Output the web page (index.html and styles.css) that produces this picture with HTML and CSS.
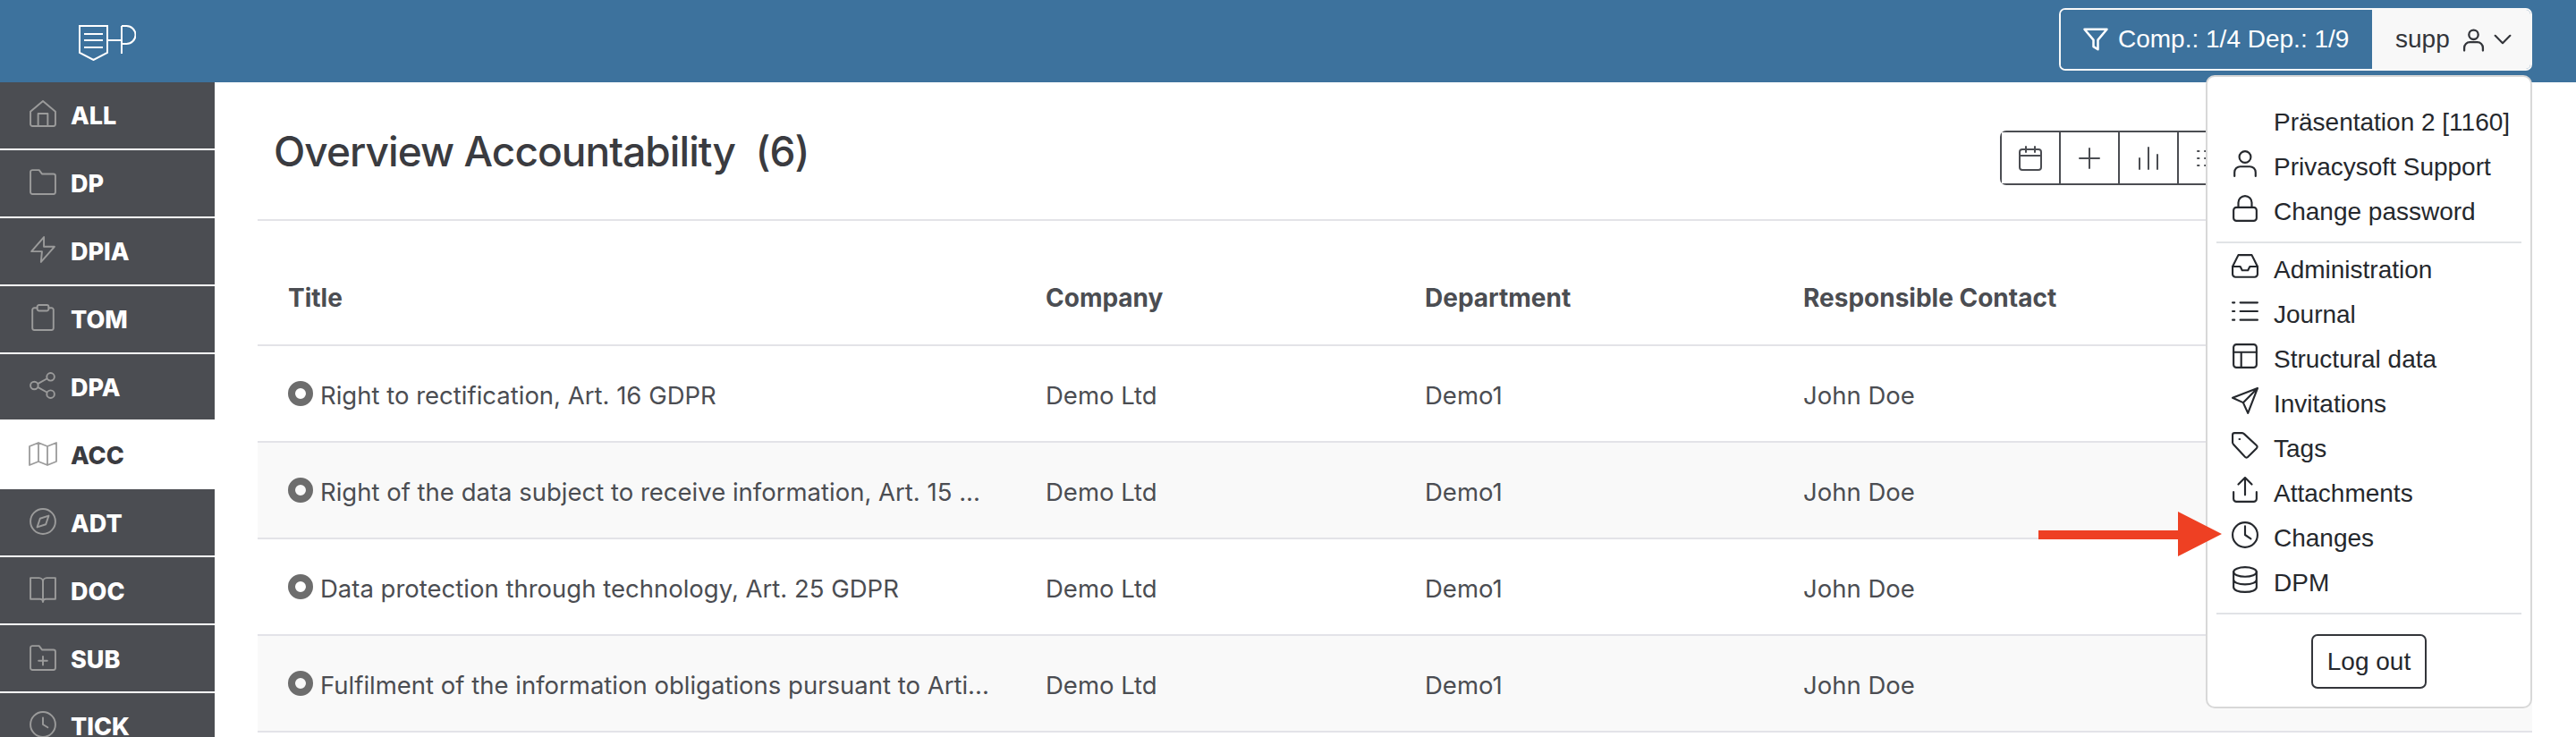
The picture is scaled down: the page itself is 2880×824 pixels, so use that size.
FILE: index.html
```html
<!DOCTYPE html>
<html lang="en">
<head>
    <meta charset="UTF-8">
    <meta name="viewport" content="width=device-width, initial-scale=1.0">
    <title>Overview Accountability</title>
    <link rel="stylesheet" href="styles.css">
</head>
<body>
    <header class="topbar">
        <svg class="logo" viewBox="0 0 64 40" fill="none" stroke="#fff" stroke-width="2">
            <path d="M1 1h31v30L16.500 39 1 31z"/>
            <path d="M6 10h21M6 17h21M6 25h21"/>
            <path d="M32 17h16M48 1v31M48 1h5.500a10 10 0 0 1 0 20H48"/>
        </svg>
        <div class="topbar-actions">
            <button class="filter-btn">
                <svg class="icon filter-icon" viewBox="0 0 24 24"><path d="M2 3h20l-8 9.500V21l-4-2.500v-6z"/></svg>
                Comp.: 1/4 Dep.: 1/9
            </button>
            <button class="user-btn">
                supp
                <svg class="icon user-icon" viewBox="0 0 24 24"><circle cx="12" cy="7" r="5"/><path d="M2 24v-3a6 6 0 0 1 6-6h8a6 6 0 0 1 6 6v3"/></svg>
                <svg class="icon chevron-icon" viewBox="0 0 24 24"><path d="M2 7l10 10L22 7"/></svg>
            </button>
        </div>
    </header>

    <div class="layout">
        <nav class="sidebar">
            <a class="side-item"><svg class="icon side-icon" viewBox="0 0 28 28"><path d="M1 12L14 1l13 11v13a2 2 0 0 1-2 2H3a2 2 0 0 1-2-2z"/><path d="M9 27V14h10v13"/></svg>ALL</a>
            <a class="side-item"><svg class="icon side-icon" viewBox="0 0 28 28"><path d="M1 4a2 2 0 0 1 2-2h7l3 4h12a2 2 0 0 1 2 2v17a2 2 0 0 1-2 2H3a2 2 0 0 1-2-2z"/></svg>DP</a>
            <a class="side-item"><svg class="icon side-icon" viewBox="0 0 28 28"><path d="M15 1L2 16h11l-1 11 14-16H15z"/></svg>DPIA</a>
            <a class="side-item"><svg class="icon side-icon" viewBox="0 0 28 28"><path d="M8 4H5a2 2 0 0 0-2 2v19a2 2 0 0 0 2 2h18a2 2 0 0 0 2-2V6a2 2 0 0 0-2-2h-3"/><rect x="8" y="1" width="12" height="6" rx="2"/></svg>TOM</a>
            <a class="side-item"><svg class="icon side-icon" viewBox="0 0 28 28"><circle cx="22" cy="5" r="4"/><circle cx="5" cy="14" r="4"/><circle cx="22" cy="23" r="4"/><path d="M9 12l9-5M9 16l9 5"/></svg>DPA</a>
            <a class="side-item active"><svg class="icon side-icon wide" viewBox="0 0 32 28"><path d="M1 6l10-4 10 4 10-4v21l-10 4-10-4-10 4zM11 2v21M21 6v21"/></svg>ACC</a>
            <a class="side-item"><svg class="icon side-icon" viewBox="0 0 28 28"><circle cx="14" cy="14" r="13"/><path d="M20 8l-3 9-9 3 3-9z"/></svg>ADT</a>
            <a class="side-item"><svg class="icon side-icon" viewBox="0 0 28 28"><path d="M1 2h9a4 4 0 0 1 4 4v21a3 3 0 0 0-3-3H1zM27 2h-9a4 4 0 0 0-4 4v21a3 3 0 0 1 3-3h10z"/></svg>DOC</a>
            <a class="side-item"><svg class="icon side-icon" viewBox="0 0 28 28"><path d="M1 4a2 2 0 0 1 2-2h7l3 4h12a2 2 0 0 1 2 2v17a2 2 0 0 1-2 2H3a2 2 0 0 1-2-2z"/><path d="M14 13v9M9.500 17.500h9"/></svg>SUB</a>
            <a class="side-item"><svg class="icon side-icon" viewBox="0 0 28 28"><circle cx="14" cy="14" r="13"/><path d="M14 7v7l5 3"/></svg>TICK</a>
        </nav>

        <main class="content">
            <div class="page-head">
                <h1>Overview Accountability&nbsp; (6)</h1>
                <div class="toolbar">
                    <button class="tool"><svg class="icon tool-icon" viewBox="0 0 28 28"><rect x="2" y="4" width="24" height="23" rx="3"/><path d="M2 11h24M9 1v6M19 1v6"/></svg></button>
                    <button class="tool"><svg class="icon tool-icon" viewBox="0 0 28 28"><path d="M14 3v22M3 14h22"/></svg></button>
                    <button class="tool"><svg class="icon tool-icon" viewBox="0 0 28 28"><path d="M14 2v24M4 14v12M24 10v16"/></svg></button>
                    <button class="tool"><svg class="icon tool-icon" viewBox="0 0 28 28"><path d="M3 6h1.500M3 14h1.500M3 22h1.500M11 6h1.500M11 14h1.500M11 22h1.500M19 6h6M19 14h6M19 22h6"/></svg></button>
                    <button class="tool"></button>
                </div>
            </div>

            <table class="overview">
                <colgroup><col class="col-title"><col class="col-company"><col class="col-dept"><col class="col-contact"></colgroup>
                <thead>
                    <tr><th>Title</th><th>Company</th><th>Department</th><th>Responsible Contact</th></tr>
                </thead>
                <tbody>
                    <tr><td><span class="dot"></span>Right to rectification, Art. 16 GDPR</td><td>Demo Ltd</td><td>Demo1</td><td>John Doe</td></tr>
                    <tr><td><span class="dot"></span>Right of the data subject to receive information, Art. 15 ...</td><td>Demo Ltd</td><td>Demo1</td><td>John Doe</td></tr>
                    <tr><td><span class="dot"></span>Data protection through technology, Art. 25 GDPR</td><td>Demo Ltd</td><td>Demo1</td><td>John Doe</td></tr>
                    <tr><td><span class="dot"></span>Fulfilment of the information obligations pursuant to Arti...</td><td>Demo Ltd</td><td>Demo1</td><td>John Doe</td></tr>
                </tbody>
            </table>
        </main>
    </div>

    <!-- user dropdown, open -->
    <div class="user-menu">
        <a class="menu-item"><span class="menu-slot"></span>Präsentation 2 [1160]</a>
        <a class="menu-item"><svg class="icon menu-icon" viewBox="0 0 28 28"><circle cx="14" cy="7" r="6"/><path d="M3 27v-4a6 6 0 0 1 6-6h10a6 6 0 0 1 6 6v4"/></svg>Privacysoft Support</a>
        <a class="menu-item"><svg class="icon menu-icon" viewBox="0 0 28 28"><rect x="2" y="13" width="24" height="14" rx="3"/><path d="M7 13V8a7 7 0 0 1 14 0v5"/></svg>Change password</a>
        <hr class="menu-sep first">
        <a class="menu-item"><svg class="icon menu-icon" viewBox="0 0 28 28"><path d="M1 14h8l2 4h6l2-4h8"/><path d="M7 2h14l6 12v8a3 3 0 0 1-3 3H4a3 3 0 0 1-3-3v-8z"/></svg>Administration</a>
        <a class="menu-item"><svg class="icon menu-icon" viewBox="0 0 28 28"><path d="M9 5h18M9 14h18M9 23h18M1 5h2M1 14h2M1 23h2"/></svg>Journal</a>
        <a class="menu-item"><svg class="icon menu-icon" viewBox="0 0 28 28"><rect x="2" y="2" width="24" height="24" rx="3"/><path d="M2 10h24M10 10v16"/></svg>Structural data</a>
        <a class="menu-item"><svg class="icon menu-icon" viewBox="0 0 28 28"><path d="M27 1L1 11l11 5 5 11zM27 1L12 16"/></svg>Invitations</a>
        <a class="menu-item"><svg class="icon menu-icon" viewBox="0 0 28 28"><path d="M1 3a2 2 0 0 1 2-2h8a3 3 0 0 1 2 1l13 12a2 2 0 0 1 0 3l-9 9a2 2 0 0 1-3 0L2 13a3 3 0 0 1-1-2z"/><path d="M8 7.500h.5"/></svg>Tags</a>
        <a class="menu-item"><svg class="icon menu-icon" viewBox="0 0 28 28"><path d="M2 16v7a3 3 0 0 0 3 3h18a3 3 0 0 0 3-3v-7M14 19V2M7 8l7-7 7 7"/></svg>Attachments</a>
        <a class="menu-item"><svg class="icon menu-icon" viewBox="0 0 28 28"><circle cx="14" cy="14" r="13"/><path d="M14 5v9l6 4"/></svg>Changes</a>
        <a class="menu-item"><svg class="icon menu-icon" viewBox="0 0 28 28"><ellipse cx="14" cy="6" rx="12" ry="5"/><path d="M2 6v16c0 3 5 5 12 5s12-2 12-5V6M2 14c0 3 5 5 12 5s12-2 12-5"/></svg>DPM</a>
        <hr class="menu-sep">
        <button class="logout">Log out</button>
    </div>

    <!-- annotation arrow on the screenshot -->
    <svg class="callout" viewBox="0 0 205 50"><path d="M0 21h156V0l49 25-49 25V31H0z"/></svg>
</body>
</html>
```

FILE: styles.css
```css
* {
    box-sizing: border-box;
}

html, body {
    height: 824px;
    overflow: hidden;
}

body {
    margin: 0;
    background: #fff;
    color: #3a3b40;
    font-family: 'Inter', sans-serif;
    display: flex;
    flex-direction: column;
    position: relative;
}

.icon {
    fill: none;
    stroke: currentColor;
    stroke-width: 2;
    stroke-linecap: round;
    stroke-linejoin: round;
    flex-shrink: 0;
}

.topbar {
    height: 92px;
    flex-shrink: 0;
    background: #3d729d;
    display: flex;
    align-items: flex-start;
    justify-content: space-between;
    padding: 9px 49px 0 88px;
}

.logo {
    width: 64px;
    height: 40px;
    margin-top: 19px;
}

.topbar-actions {
    display: flex;
    height: 70px;
    border-radius: 7px;
    overflow: hidden;
    border: 2px solid #f8f8f8;
    font-family: 'Liberation Sans', Arial, sans-serif;
    font-size: 28px;
}

.topbar-actions button {
    font: inherit;
    border: 0;
    display: flex;
    align-items: center;
    padding: 0;
}

.filter-btn {
    width: 348px;
    background: #3d729d;
    color: #fff;
    padding-left: 24px !important;
    gap: 10px;
}

.filter-icon {
    width: 30px;
    height: 34px;
}

.user-btn {
    width: 177px;
    background: #f8f8f8;
    color: #33353a;
    padding-left: 26px !important;
}

.user-icon {
    width: 25px;
    height: 28px;
    margin-left: 14px;
    stroke-width: 2.2;
}

.chevron-icon {
    width: 20px;
    height: 20px;
    margin-left: 10px;
    stroke-width: 2.6;
}

.layout {
    display: flex;
    flex: 1;
    min-height: 0;
}

.sidebar {
    width: 240px;
    flex-shrink: 0;
    display: flex;
    flex-direction: column;
}

.side-item {
    height: 75.900px;
    flex-shrink: 0;
    background: #4b4d52;
    color: #fff;
    border-bottom: 2px solid #fff;
    display: flex;
    align-items: center;
    padding: 2px 0 0 33px;
    font-weight: 800;
    font-size: 27px;
}

.side-item.active {
    background: #fff;
    color: #3a3b40;
    border-bottom: 0;
    padding-top: 0;
}

.side-icon {
    width: 30px;
    height: 30px;
    margin-right: 16px;
    color: #9b9b9b;
    stroke-width: 1.800;
    margin-top: -5px;
}

.side-icon.wide {
    width: 32px;
    margin-left: -1px;
    margin-right: 15px;
}

.content {
    flex: 1;
    padding: 0 49px 0 48px;
    min-width: 0;
}

.page-head {
    height: 155px;
    border-bottom: 2px solid #e3e3e8;
    display: flex;
    align-items: flex-start;
    justify-content: space-between;
    padding: 0 0 0 18px;
}

h1 {
    margin: 50px 0 0;
    font-size: 46px;
    font-weight: 500;
    letter-spacing: -0.950px;
    line-height: 54px;
    color: #3a3b40;
}

.toolbar {
    display: flex;
    margin-top: 54px;
    margin-right: 261px;
    height: 61px;
    border: 2px solid #4b4d52;
    border-radius: 7px;
}

.tool {
    width: 66px;
    background: #fff;
    border: 0;
    border-right: 2px solid #4b4d52;
    color: #4b4d52;
    display: flex;
    align-items: center;
    justify-content: center;
    padding: 0;
}

.tool:last-child {
    border-right: 0;
}

.tool-icon {
    width: 28px;
    height: 28px;
}

.overview {
    width: 100%;
    table-layout: fixed;
    border-collapse: collapse;
    font-size: 27.500px;
    color: #4b4d52;
}

.col-title { width: 847px; }
.col-company { width: 424px; }
.col-dept { width: 423px; }

.overview th {
    height: 139px;
    padding: 34px 0 0 34px;
    text-align: left;
    font-size: 28px;
    font-weight: 700;
    border-bottom: 2px solid #e3e3e8;
}

.overview td {
    height: 108px;
    padding: 4px 0 0 34px;
    border-bottom: 2px solid #e3e3e8;
    white-space: nowrap;
}

.overview tbody tr:nth-child(even) {
    background: #f9f9f9;
}

.dot {
    display: inline-block;
    width: 28px;
    height: 28px;
    border: 8px solid #6d6d6d;
    border-radius: 50%;
    margin-right: 8px;
    vertical-align: -2px;
}

.user-menu {
    position: absolute;
    left: 2466px;
    top: 84px;
    width: 365px;
    height: 708px;
    background: #fff;
    border: 2px solid #d8d8d8;
    border-radius: 10px;
    padding: 26px 10px 0;
    font-family: 'Liberation Sans', Arial, sans-serif;
    font-size: 28px;
    color: #25282d;
    display: flex;
    flex-direction: column;
}

.menu-item {
    height: 50px;
    flex-shrink: 0;
    display: flex;
    align-items: center;
    padding-left: 17px;
}

.menu-icon {
    width: 30px;
    height: 30px;
    margin-right: 17px;
    margin-top: -8px;
    stroke-width: 2;
    color: #25282d;
}

.menu-slot {
    width: 47px;
    flex-shrink: 0;
}

.menu-sep {
    width: 100%;
    height: 2px;
    flex-shrink: 0;
    margin: 8px 0 6px;
    border: 0;
    background: #e1e3e6;
}

.menu-sep.first {
    margin: 8px 0 5px;
}

.logout {
    align-self: center;
    margin-top: 16px;
    width: 129px;
    height: 61px;
    font: inherit;
    color: #25282d;
    background: #fff;
    border: 2px solid #33353a;
    border-radius: 7px;
    padding: 0;
}

.callout {
    position: absolute;
    left: 2279px;
    top: 572px;
    width: 205px;
    height: 50px;
    fill: #ee4023;
}
```
